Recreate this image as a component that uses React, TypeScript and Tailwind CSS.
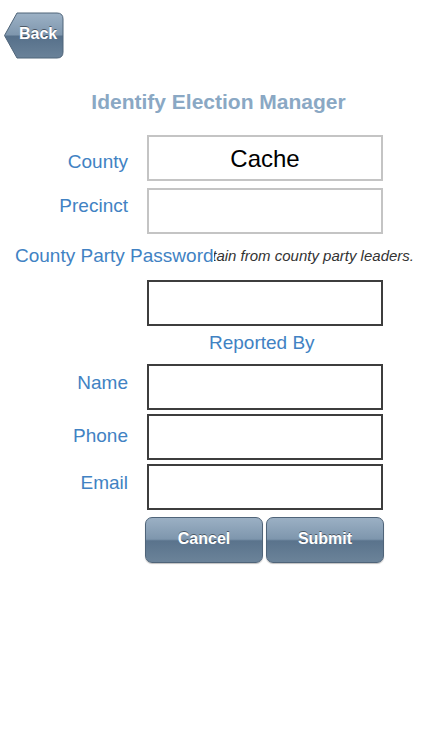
import React, { useState } from 'react';

const fieldBase = 'ml-[19px] h-[46px] w-[236px] shrink-0 bg-white px-2 outline-none';
const label = 'w-[128px] shrink-0 text-right text-[19px] leading-6 text-[#4182c3]';
const btn =
  'h-[46px] w-[118px] rounded-[7px] border border-[#4f6479] bg-[linear-gradient(to_bottom,#9bb0c4_0%,#7e96ad_48%,#5a738c_52%,#6b8399_100%)] pb-[3px] text-[16px] font-bold text-white [text-shadow:0_-1px_0_rgba(0,0,0,0.45)] shadow-[0_1px_1px_rgba(0,0,0,0.25)]';

const BackButton = () => (
  <button className="relative h-[47px] w-[60px]">
    <svg className="absolute inset-0" width="60" height="47" viewBox="0 0 60 47">
      <defs>
        <linearGradient id="bk" x1="0" y1="0" x2="0" y2="1">
          <stop offset="0" stopColor="#9db2c6" />
          <stop offset="0.48" stopColor="#7f97ae" />
          <stop offset="0.52" stopColor="#56708a" />
          <stop offset="1" stopColor="#6a8299" />
        </linearGradient>
      </defs>
      <path
        d="M0.5 23.5 L13 1 H53 Q59 1 59 7 V40 Q59 46 53 46 H13 Z"
        fill="url(#bk)"
        stroke="#4f6479"
        strokeWidth="1"
      />
    </svg>
    <span className="relative block pb-[4px] pl-[15px] text-left text-[16px] font-bold leading-[43px] text-white [text-shadow:0_-1px_0_rgba(0,0,0,0.45)]">
      Back
    </span>
  </button>
);

// labelTop: vertical offset of the label inside the 46px row, as in the screenshot
const Row = ({
  name,
  labelTop,
  dark,
  children,
}: {
  name: string;
  labelTop: string;
  dark?: boolean;
  children?: React.ReactNode;
}) => (
  <div className="flex items-start">
    <div className={label + ' ' + labelTop}>{name}</div>
    <div
      className={
        fieldBase +
        (dark ? ' border-2 border-[#3d3d3d]' : ' border-2 border-[#c4c4c4]') +
        ' flex items-center justify-center'
      }
    >
      {children}
    </div>
  </div>
);

export default function App() {
  const [county] = useState('Cache');

  return (
    <div className="h-[750px] w-full bg-white font-['Liberation_Sans',Arial,sans-serif]">
      <div className="pl-[4px] pt-[12px]">
        <BackButton />
      </div>

      <h1 className="mt-[31px] pl-[15px] text-center text-[21px] font-bold leading-6 text-[#8aa8c4]">
        Identify Election Manager
      </h1>

      <div className="mt-[21px] flex flex-col">
        <Row name="County" labelTop="mt-[15px]">
          <span className="pt-[2px] text-[24px] text-black">{county}</span>
        </Row>
        <div className="mt-[7px]">
          <Row name="Precinct" labelTop="mt-[6px]" />
        </div>

        <div className="mt-[10px] flex items-center">
          <div className="shrink-0 bg-white pl-[15px] text-[19px] leading-6 text-[#4182c3]">
            County Party Password
          </div>
          <div className="flex min-w-0 flex-1 justify-end overflow-hidden whitespace-nowrap pr-[8px] text-[15px] italic leading-6 text-[#333]">
            Obtain from county party leaders.
          </div>
        </div>

        <div className="mt-[12px] ml-[147px] h-[46px] w-[236px] border-2 border-[#3d3d3d]" />

        <div className="mt-[5px] ml-[209px] text-[19px] leading-6 text-[#4182c3]">Reported By</div>

        <div className="mt-[9px]">
          <Row name="Name" labelTop="mt-[7px]" dark />
        </div>
        <div className="mt-[4px]">
          <Row name="Phone" labelTop="mt-[10px]" dark />
        </div>
        <div className="mt-[4px]">
          <Row name="Email" labelTop="mt-[7px]" dark />
        </div>

        <div className="ml-[145px] mt-[7px] flex gap-[3px]">
          <button className={btn}>Cancel</button>
          <button className={btn}>Submit</button>
        </div>
      </div>
    </div>
  );
}
